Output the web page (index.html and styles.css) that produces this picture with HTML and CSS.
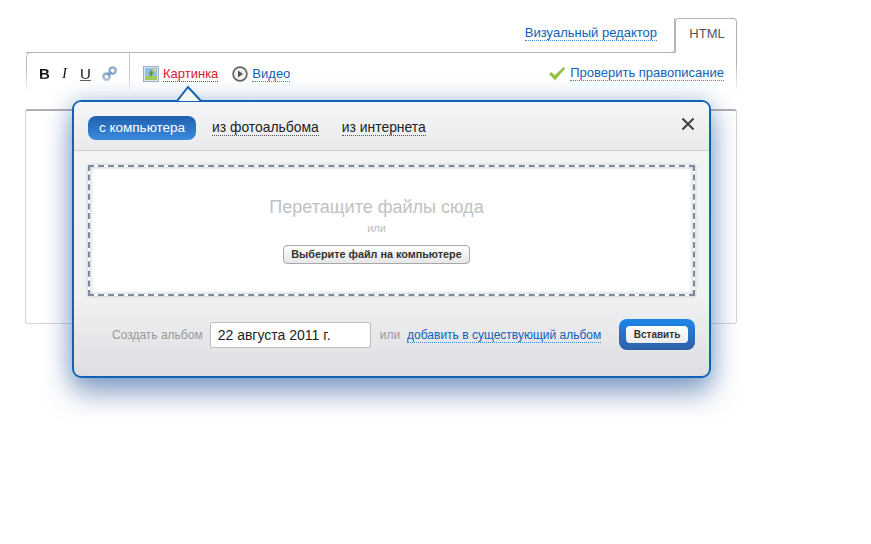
FILE: index.html
```html
<!DOCTYPE html>
<html lang="ru">
<head>
<meta charset="utf-8">
<title>Редактор</title>
<link rel="stylesheet" href="styles.css">
</head>
<body>
<div class="editor">
  <div class="modes">
    <a class="mode-link"><span class="link">Визуальный редактор</span></a>
    <div class="mode-tab">HTML</div>
  </div>
  <div class="toolbar">
    <div class="format">
      <span class="fmt fmt-b">B</span>
      <span class="fmt fmt-i">I</span>
      <span class="fmt fmt-u">U</span>
      <svg class="chain" width="15" height="15" viewBox="0 0 16 16"><g fill="none" stroke="#8fb0cc" stroke-width="2.6"><rect x="8" y="1.6" width="6.6" height="6.6" rx="3.2"/><rect x="1.6" y="8" width="6.6" height="6.6" rx="3.2"/></g><path d="M6 10l4-4" stroke="#7a9fc0" stroke-width="2.4"/></svg>
    </div>
    <div class="inserts">
      <svg class="ico-pic" width="16" height="16" viewBox="0 0 16 16"><rect x=".5" y=".5" width="15" height="15" fill="#dfe7ee" stroke="#9ab0c4"/><rect x="2" y="2" width="12" height="12" fill="#8fc0e8"/><rect x="2" y="10" width="12" height="4" fill="#a5c95c"/><path d="M8 4l3 3.4H9.2V10H6.8V7.4H5z" fill="#6d9a2c"/><circle cx="12" cy="4" r="1.3" fill="#f4d75e"/></svg>
      <span class="red-link">Картинка</span>
      <svg class="ico-play" width="16" height="16" viewBox="0 0 16 16"><circle cx="8" cy="8" r="6.9" fill="#f2f2f2" stroke="#666" stroke-width="1.7"/><path d="M6 4.6l5 3.4-5 3.4z" fill="#555"/></svg>
      <span class="link">Видео</span>
    </div>
    <div class="spell">
      <svg width="18" height="15" viewBox="0 0 18 15"><path d="M1 8l2.6-2 3 3.2L15.6 1l1.6 1.4L7 14.2z" fill="#95c040"/></svg>
      <span class="link">Проверить правописание</span>
    </div>
  </div>
  <div class="textarea"></div>
  <div class="dialog">
    <svg class="beak" width="32" height="17" viewBox="0 0 32 17"><path d="M0 16h3L14 2l13 14h5" fill="#f5f6f8" stroke="#0f62b5" stroke-width="2"/></svg>
    <div class="dlg-head">
      <span class="pill">с компьютера</span>
      <span class="dlg-tab">из фотоальбома</span>
      <span class="dlg-tab">из интернета</span>
      <svg class="close" width="14" height="14" viewBox="0 0 14 14"><path d="M1.5 1.5l11 11M12.5 1.5l-11 11" stroke="#444" stroke-width="2.2"/></svg>
    </div>
    <div class="dlg-body">
      <div class="drop">
        <div class="drop-title">Перетащите файлы сюда</div>
        <div class="drop-or">или</div>
        <div class="pick">Выберите файл на компьютере</div>
      </div>
    </div>
    <div class="dlg-foot">
      <span class="muted">Создать альбом</span>
      <div class="field">22 августа 2011 г.</div>
      <span class="muted">или</span>
      <span class="link foot-link">добавить в существующий альбом</span>
      <div class="insert"><span class="insert-in">Вставить</span></div>
    </div>
  </div>
</div>
</body>
</html>
```
FILE: styles.css
```css
* { box-sizing: border-box; }
html, body { margin: 0; padding: 0; background: #fff; }
body { font-family: "Liberation Sans", Arial, sans-serif; font-size: 13px; color: #333; height: 544px; overflow: hidden; }

.editor { position: relative; width: 711px; margin: 18px 0 0 26px; }

.modes { display: flex; justify-content: flex-end; align-items: flex-end; height: 35px; }
.mode-link { flex: 1; height: 35px; border-bottom: 1px solid #b4b4b4; border-bottom-right-radius: 4px; border-right: 1px solid #b4b4b4; text-align: right; padding: 7px 17px 0 0; }
.mode-tab { width: 62px; height: 35px; border: 1px solid #b4b4b4; border-bottom: 0; border-radius: 4px 4px 0 0; text-align: center; padding: 7px 0 0 2px; color: #555; font-size: 13px; }

.link { color: #0f62b5; border-bottom: 1px dotted #3f86cc; line-height: 14px; display: inline-block; }

.toolbar { display: flex; align-items: flex-start; height: 57px; margin-top: -1px; position: relative; }
.toolbar::before { content: ""; position: absolute; left: 0; top: 0; width: 649px; height: 40px; border-left: 1px solid #b4b4b4; border-top: 1px solid #b4b4b4; border-top-left-radius: 5px; -webkit-mask-image: linear-gradient(#000 40%, transparent); mask-image: linear-gradient(#000 40%, transparent); }
.toolbar::after { content: ""; position: absolute; right: 0; top: 0; height: 40px; border-right: 1px solid #b4b4b4; -webkit-mask-image: linear-gradient(#000 30%, transparent); mask-image: linear-gradient(#000 30%, transparent); }
.format { display: flex; align-items: center; width: 104px; height: 39px; padding: 13px 0 10px 13px; border-right: 1px solid #c4c4c4; -webkit-mask-image: linear-gradient(#000 60%, transparent); mask-image: linear-gradient(#000 60%, transparent); }
.fmt { font-size: 15px; color: #111; }
.fmt-b { font-weight: bold; width: 11px; }
.fmt-i { font-family: "Liberation Serif", serif; font-style: italic; margin-left: 12px; width: 7px; }
.fmt-u { text-decoration: underline; margin-left: 11px; width: 11px; }
.chain { margin-left: 11px; }
.inserts { display: flex; align-items: center; margin: 14px 0 0 13px; }
.ico-pic { margin-right: 4px; }
.red-link { color: #d9202e; border-bottom: 1px dotted #d9202e; line-height: 14px; }
.ico-play { margin: 0 4px 0 14px; }
.spell { margin: 14px 13px 0 auto; display: flex; align-items: center; gap: 4px; }

.textarea { height: 215px; margin-left: -1px; border: 1px solid #d4d4d4; border-top: 2px solid #b0b0b0; border-radius: 3px; }

.dialog { position: absolute; left: 46px; top: 82px; width: 639px; height: 278px; border: 2px solid #0f62b5; border-radius: 9px; background: linear-gradient(#f3f4f6, #f1f2f4 70%, #dddee1); box-shadow: 0 15px 28px rgba(30,80,150,.5), 0 0 22px rgba(60,110,180,.3); display: flex; flex-direction: column; }
.beak { position: absolute; left: 100px; top: -17px; }
.dlg-head { height: 49px; flex: none; display: flex; align-items: center; padding: 3px 14px 0 14px; background: linear-gradient(#f5f6f8, #e9eaec); border-bottom: 1px solid #cfd0d2; border-radius: 7px 7px 0 0; }
.pill { width: 108px; height: 24px; line-height: 24px; text-align: center; color: #fff; font-size: 13.5px; background: linear-gradient(#2060ae, #3a8ae0); border-radius: 8px; margin-right: 16px; }
.dlg-tab { color: #222; border-bottom: 1px dotted #555; line-height: 15px; margin-right: 23px; font-size: 13.9px; }
.close { margin: -7px 0 0 auto; }
.dlg-body { flex: none; height: 159px; padding: 14px 14px 0 14px; }
.drop { height: 131px; border: 2px dashed #7d8a9c; box-shadow: inset 0 0 4px rgba(70,90,120,.4), 0 0 3px rgba(70,90,120,.3); background: #fff; text-align: center; padding: 30px 30px 0 0; }
.drop-title { font-size: 18px; line-height: 20px; color: #c2c2c2; }
.drop-or { font-size: 11px; line-height: 13px; color: #bdbdbd; margin-top: 5px; }
.pick { display: inline-block; width: 187px; height: 19px; margin-top: 10px; border: 1px solid #a8a8a8; border-radius: 4px; background: linear-gradient(#fff, #e6e6e6); font-size: 10.8px; font-weight: bold; line-height: 17px; color: #333; }
.dlg-foot { flex: 1; display: flex; align-items: center; padding: 0 14px 18px 38px; }
.muted { color: #999; font-size: 12px; margin-top: 2px; }
.field { width: 161px; height: 26px; margin: 2px 9px 0 7px; padding-left: 7px; border: 1px solid #bcbcbc; border-radius: 2px; background: #fff; line-height: 24px; font-size: 14px; color: #222; }
.foot-link { font-size: 12px; margin: 2px 0 0 7px; }
.insert { margin-left: auto; width: 76px; height: 31px; display: flex; align-items: center; justify-content: center; border-radius: 8px; background: linear-gradient(#1c86ea, #2f5fa6); }
.insert-in { width: 62px; height: 17px; background: linear-gradient(#fff, #ececec); border-radius: 4px; text-align: center; font-size: 10px; font-weight: bold; line-height: 17px; color: #333; }
```
